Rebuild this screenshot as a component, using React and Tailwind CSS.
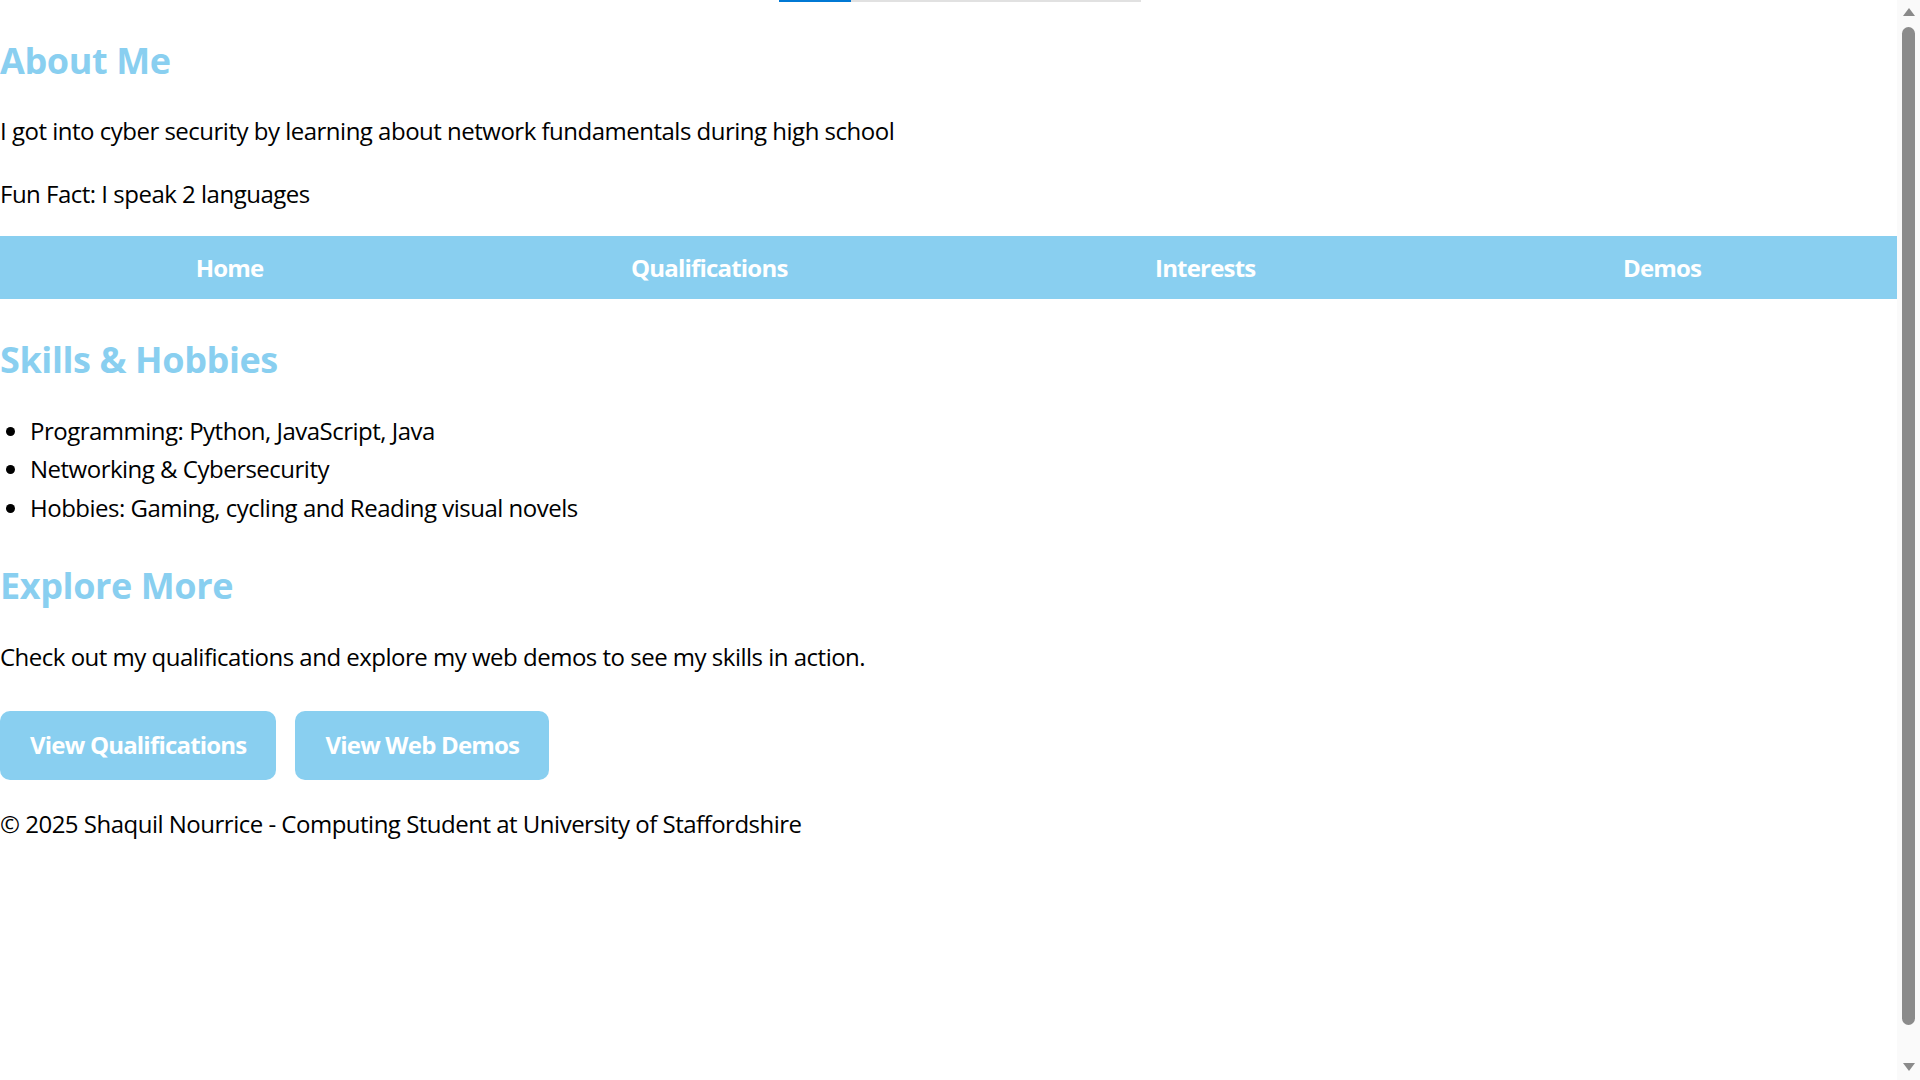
import React from "react";

const H2 = "text-[36px] font-bold leading-[1.6] tracking-[-0.4px] text-[#89CFF0]";
const BTN = "rounded-[10px] bg-[#89CFF0] px-[30px] py-[15px] font-bold leading-[1.6] tracking-[-0.8px] text-white";

export default function App() {
  return (
    <div className="flex h-screen w-full overflow-hidden bg-white text-black" style={{ fontFamily: '"Open Sans", "Noto Sans", sans-serif' }}>
      <main className="min-w-0 flex-1 text-[24px] leading-[1.6] tracking-[-0.5px]">
        <div className="flex h-[2px]">
          <div className="w-[779px]" />
          <div className="w-[72px] bg-[#0078d4]" />
          <div className="w-[290px] bg-[#e1e1e1]" />
        </div>
        <h2 className={`mt-[30px] ${H2}`}>About Me</h2>
        <p className="mt-[22px]">I got into cyber security by learning about network fundamentals during high school</p>
        <p className="mt-[25px]">Fun Fact: I speak 2 languages</p>
        <nav className="mt-[23px] flex h-[63px] items-center justify-around bg-[#89CFF0] px-3">
          {["Home", "Qualifications", "Interests", "Demos"].map((t) => (
            <a key={t} className="font-bold tracking-[-0.8px] text-white">{t}</a>
          ))}
        </nav>
        <h2 className={`mt-[32px] ${H2}`}>Skills &amp; Hobbies</h2>
        <ul className="mt-[23px] list-disc pl-[30px]">
          <li>Programming: Python, JavaScript, Java</li>
          <li>Networking &amp; Cybersecurity</li>
          <li>Hobbies: Gaming, cycling and Reading visual novels</li>
        </ul>
        <h2 className={`mt-[30px] ${H2}`}>Explore More</h2>
        <p className="mt-[23px]">Check out my qualifications and explore my web demos to see my skills in action.</p>
        <div className="mt-[35px] flex gap-[19px]">
          <button className={BTN}>View Qualifications</button>
          <button className={BTN}>View Web Demos</button>
        </div>
        <footer className="mt-[25px]">© 2025 Shaquil Nourrice - Computing Student at University of Staffordshire</footer>
      </main>
      <aside className="flex h-screen w-[23px] shrink-0 flex-col items-center bg-[#fafafa]">
        <div className="mt-[8px] h-0 w-0 border-x-[6px] border-b-[8px] border-x-transparent border-b-[#8a8a8a]" />
        <div className="mt-[11px] w-[13px] flex-1 rounded-full bg-[#8b8b8b]" />
        <div className="mb-[9px] mt-[38px] h-0 w-0 border-x-[6px] border-t-[8px] border-x-transparent border-t-[#8a8a8a]" />
      </aside>
    </div>
  );
}
